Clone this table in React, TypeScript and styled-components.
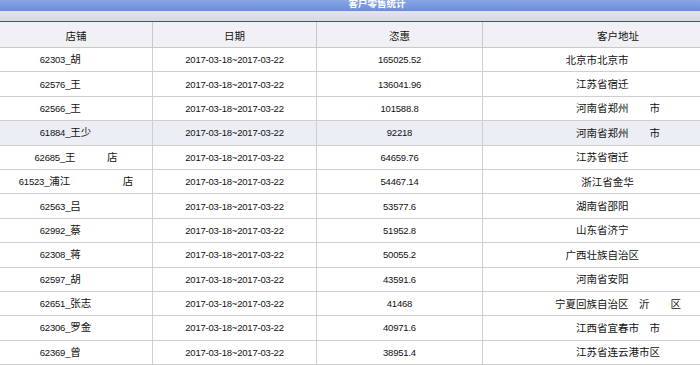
import React from "react";
import styled, { createGlobalStyle } from "styled-components";

const Global = createGlobalStyle`
  html, body { margin: 0; padding: 0; background: #fff; overflow: hidden; }
  body { font-family: "Liberation Sans", "Noto Sans CJK SC", sans-serif; color: #111; }
`;

const Panel = styled.div`
  width: 754px;
  display: flex;
  flex-direction: column;
`;

const TitleBar = styled.div`
  height: 11px;
  overflow: hidden;
  display: flex;
  align-items: flex-end;
  justify-content: center;
  background: linear-gradient(#8aa6e4, #6a8cdc);
`;

const TitleText = styled.span`
  font-family: "Noto Sans CJK SC", sans-serif;
  font-size: 9.5px;
  font-weight: bold;
  line-height: 15px;
  color: #fff;
  flex: none;
`;

const Band = styled.div`
  height: 10px;
  background: linear-gradient(#e4e4ee, #d8d8e4);
  border-bottom: 1px solid #3a4fa8;
`;

const Table = styled.table`
  width: 754px;
  border-collapse: collapse;
  table-layout: fixed;
`;

const Th = styled.th<{ $w?: number }>`
  width: ${(p) => (p.$w ? `${p.$w}px` : "auto")};
  height: 24px;
  padding: 1px 0 0;
  font-family: "Noto Sans CJK SC", sans-serif;
  font-size: 10.5px;
  font-weight: normal;
  text-align: center;
  background: #f1f1f5;
  border-right: 1px solid #c9c9c9;
  border-bottom: 1px solid #c9c9c9;
`;

const Tr = styled.tr<{ $hl?: boolean }>`
  background: ${(p) => (p.$hl ? "#eceef5" : "#fff")};
`;

const Td = styled.td`
  height: 23.4px;
  padding: 0;
  font-family: "Noto Sans CJK SC", sans-serif;
  font-size: 10.5px;
  line-height: 12px;
  text-align: center;
  white-space: pre;
  border-right: 1px solid #cfcfcf;
  border-bottom: 1px solid #cfcfcf;
`;

const Num = styled.span`
  font-family: "Liberation Sans", sans-serif;
  font-size: 9.5px;
  letter-spacing: -0.2px;
`;

type Row = { id: string; name: string; amount: string; addr: string; hl?: boolean };

const rows: Row[] = [
  { id: "62303_", name: "胡　　　", amount: "165025.52", addr: "北京市北京市　　　　" },
  { id: "62576_", name: "王　　　", amount: "136041.96", addr: "江苏省宿迁　　　" },
  { id: "62566_", name: "王　　　", amount: "101588.8", addr: "河南省郑州　　市" },
  { id: "61884_", name: "王少　　", amount: "92218", addr: "河南省郑州　　市", hl: true },
  { id: "62685_", name: "王　　　店", amount: "64659.76", addr: "江苏省宿迁　　　" },
  { id: "61523_", name: "浦江　　　　　店", amount: "54467.14", addr: "浙江省金华　　" },
  { id: "62563_", name: "吕　　　", amount: "53577.6", addr: "湖南省邵阳　　　" },
  { id: "62992_", name: "蔡　　　", amount: "51952.8", addr: "山东省济宁　　　" },
  { id: "62308_", name: "蒋　　　", amount: "50055.2", addr: "广西壮族自治区　　　" },
  { id: "62597_", name: "胡　　　", amount: "43591.6", addr: "河南省安阳　　　" },
  { id: "62651_", name: "张志　　", amount: "41468", addr: "宁夏回族自治区　沂　　区" },
  { id: "62306_", name: "罗金　　", amount: "40971.6", addr: "江西省宜春市　市" },
  { id: "62369_", name: "曾　　　", amount: "38951.4", addr: "江苏省连云港市区" },
];

export default function App() {
  return (
    <Panel>
      <Global />
      <TitleBar>
        <TitleText>客户零售统计</TitleText>
      </TitleBar>
      <Band />
      <Table>
        <thead>
          <tr>
            <Th $w={152}>店铺</Th>
            <Th $w={163}>日期</Th>
            <Th $w={165}>恣惠</Th>
            <Th>客户地址</Th>
          </tr>
        </thead>
        <tbody>
          {rows.map((r) => (
            <Tr key={r.id} $hl={r.hl}>
              <Td>
                <Num>{r.id}</Num>
                {r.name}
              </Td>
              <Td>
                <Num>2017-03-18~2017-03-22</Num>
              </Td>
              <Td>
                <Num>{r.amount}</Num>
              </Td>
              <Td>{r.addr}</Td>
            </Tr>
          ))}
        </tbody>
      </Table>
    </Panel>
  );
}
